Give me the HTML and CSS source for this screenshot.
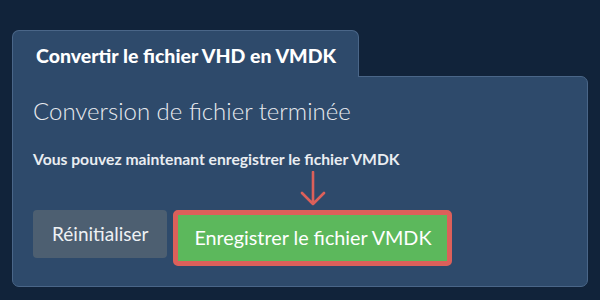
FILE: index.html
```html
<!DOCTYPE html>
<html lang="fr">
<head>
    <meta charset="UTF-8">
    <meta name="viewport" content="width=device-width, initial-scale=1.0">
    <title>Convertir VHD en VMDK</title>
    <link rel="stylesheet" href="styles.css">
</head>
<body>
    <div class="converter">
        <div class="tab">Convertir le fichier VHD en VMDK</div>

        <div class="panel">
            <h2>Conversion de fichier terminée</h2>
            <p>Vous pouvez maintenant enregistrer le fichier VMDK</p>

            <div class="actions">
                <button class="btn-reset">Réinitialiser</button>
                <div class="save-wrap">
                    <svg class="hint-arrow" width="28" height="36" viewBox="0 0 28 36">
                        <path d="M14 1 V33 M3 22 L14 33 L25 22" fill="none" stroke="#dc605a" stroke-width="2.6" stroke-linecap="round" stroke-linejoin="round"/>
                    </svg>
                    <button class="btn-save">Enregistrer le fichier VMDK</button>
                </div>
            </div>
        </div>
    </div>
</body>
</html>
```

FILE: styles.css
```css
* {
    margin: 0;
    padding: 0;
    box-sizing: border-box;
}

body {
    font-family: 'Lato', 'Open Sans', sans-serif;
    background-color: #11233a;
    color: #fff;
    min-height: 100vh;
}

.converter {
    padding: 30px 12px 0 12px;
    width: 600px;
}

.tab {
    display: inline-block;
    position: relative;
    z-index: 1;
    margin-bottom: -1px;
    padding: 14px 22px 10px 23px;
    font-size: 19.5px;
    line-height: 22px;
    font-weight: 900;
    background-color: #2e4a6b;
    border: 1px solid #4a6688;
    border-bottom: none;
    border-radius: 7px 7px 0 0;
    color: #fff;
}

.panel {
    background-color: #2e4a6b;
    border: 1px solid #4a6688;
    border-radius: 0 7px 7px 7px;
    padding: 19px 20px 20px 20px;
}

.panel h2 {
    font-size: 24px;
    line-height: 30px;
    font-weight: 300;
    color: #e8ebef;
}

.panel p {
    margin-top: 23px;
    font-size: 15.7px;
    line-height: 20px;
    font-weight: 700;
    color: #e9edf1;
}

.actions {
    display: flex;
    align-items: flex-start;
    gap: 6px;
    margin-top: 41px;
}

.btn-reset {
    font-family: inherit;
    font-size: 19px;
    line-height: 22px;
    padding: 13px 19px;
    background-color: #4d5f71;
    color: #eef1f4;
    border: none;
    border-radius: 4px;
}

.save-wrap {
    position: relative;
}

.hint-arrow {
    position: absolute;
    left: 50%;
    bottom: 100%;
    margin-left: -14px;
    margin-bottom: 3px;
}

.btn-save {
    font-family: inherit;
    font-size: 19.75px;
    line-height: 24px;
    padding: 11px 16px;
    background-color: #5cb85c;
    background-clip: padding-box;
    color: #fff;
    border: 5px solid #dc605a;
    border-radius: 5px;
}
```
